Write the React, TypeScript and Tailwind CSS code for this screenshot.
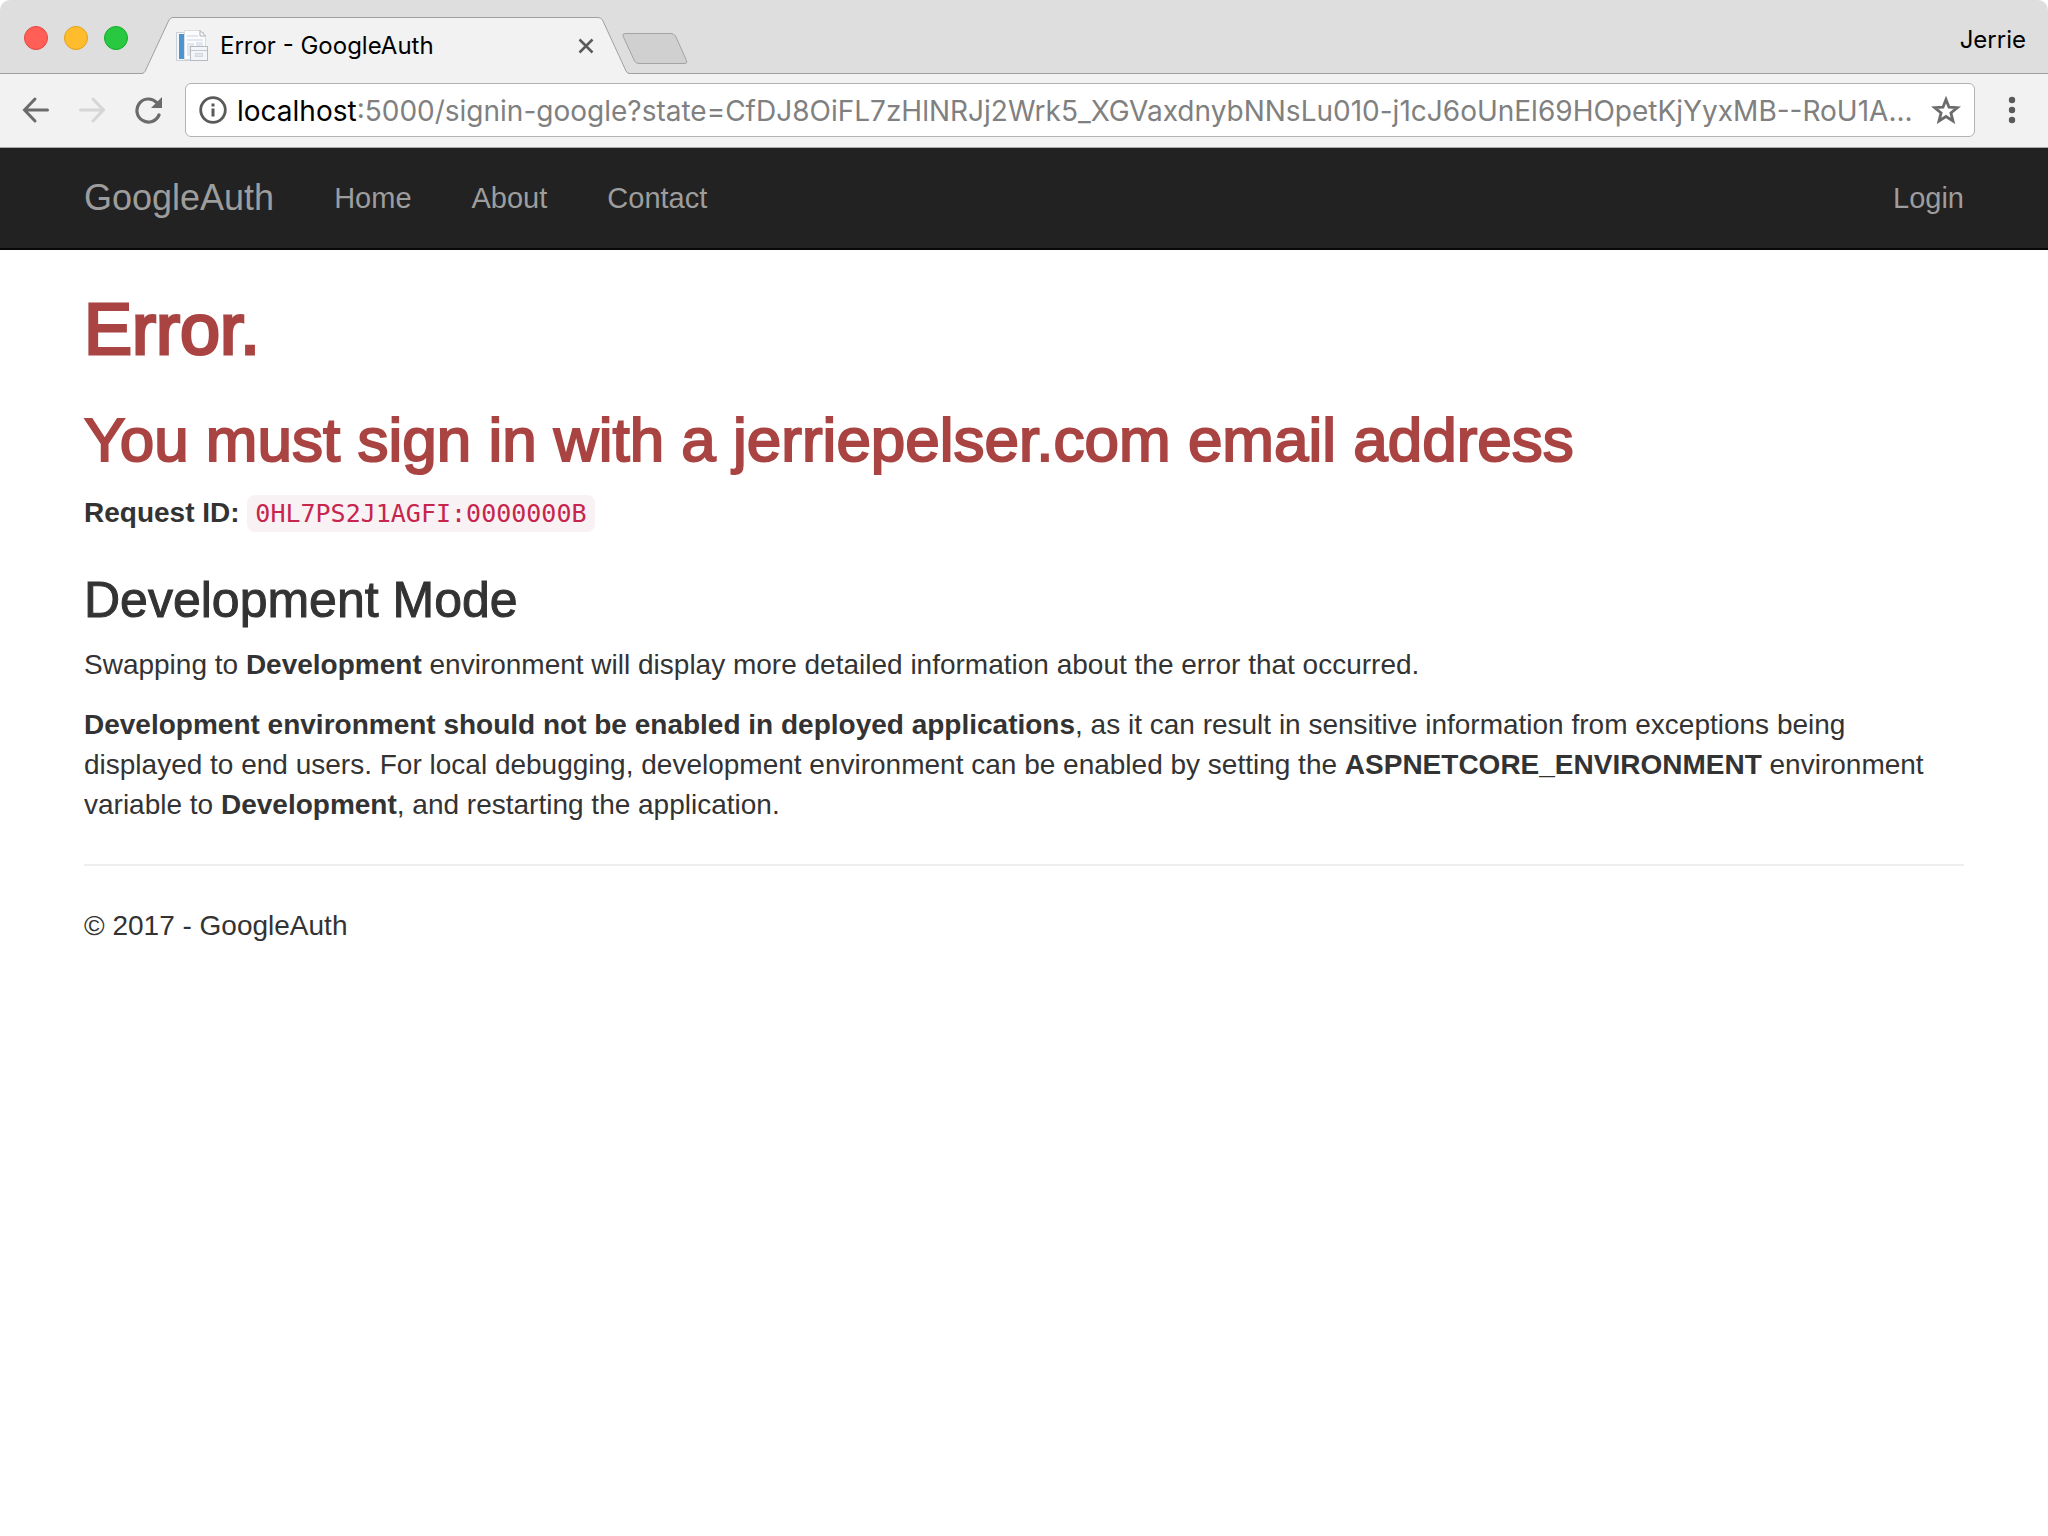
import React from "react";

const strong = "font-bold";

function Favicon() {
  return (
    <svg width="32" height="32" viewBox="0 0 32 32" className="shrink-0" aria-hidden="true">
      <rect x="0.5" y="2.5" width="27" height="28" fill="#f4f6f8" stroke="#c9d2da" />
      <rect x="3" y="4" width="5" height="25" fill="#4a94d0" />
      <path d="M8.500 .5h15.500l5.500 5.500V29.500H8.500z" fill="#fbfcfd" stroke="#d8dde1" />
      <path d="M24 .5v5.500h5.500z" fill="#fff" stroke="#a9b0b6" />
      <path d="M11 6h11M11 10h16" stroke="#e4e8ee" strokeWidth="2" />
      <rect x="11" y="13" width="7" height="13" fill="#e2e6ee" />
      <rect x="20" y="12" width="7" height="4" fill="#e2e6ee" />
      <rect x="14.500" y="16.500" width="17" height="14" fill="#f3f5f8" stroke="#b4babf" />
      <path d="M15 20.500h16" stroke="#c3c9cf" />
      <rect x="19.500" y="23.500" width="7" height="3" fill="#e3e6ea" stroke="#d3d8dc" />
    </svg>
  );
}

function TabStrip() {
  return (
    <header className="flex h-[74px] items-stretch rounded-t-[10px] border-b border-[#a0a0a0] bg-[#dedede]">
      <div className="flex items-center gap-4 pt-[3px] pl-6">
        <button aria-label="Close window" className="size-6 rounded-full border border-[#e2463f] bg-[#ff5f57]" />
        <button aria-label="Minimise window" className="size-6 rounded-full border border-[#e1a116] bg-[#ffbd2e]" />
        <button aria-label="Zoom window" className="size-6 rounded-full border border-[#12ac28] bg-[#28c940]" />
      </div>
      <div className="relative -mb-px ml-[14px] flex h-[74px] w-[488px] items-center pt-[18px]">
        <svg className="absolute inset-0" width="488" height="74" viewBox="0 0 488 74" aria-hidden="true">
          <path d="M0 74 Q2 73 3 71.500 L27 20 Q28.500 17.500 31 17.500 H456 Q459 17.500 460.500 20 L484 71 Q485 73.500 488 74z" fill="#f2f2f2" />
          <path d="M0 73.500 Q2 73 3 71.500 L27 20 Q28.500 17.500 31 17.500 H456 Q459 17.500 460.500 20 L484 71 Q485 73.500 488 73.500" fill="none" stroke="#a0a0a0" />
        </svg>
        <div className="relative flex w-full items-center pr-9 pl-[34px]">
          <Favicon />
          <span className="ml-3 grow font-['Inter',sans-serif] text-[24px] leading-8 text-black">Error - GoogleAuth</span>
          <button aria-label="Close tab">
            <svg width="16" height="16" viewBox="0 0 16 16" stroke="#5a5a5a" strokeWidth="2.500">
              <path d="M1.500 1.500l13 13M14.500 1.500l-13 13" />
            </svg>
          </button>
        </div>
      </div>
      <button aria-label="New tab" className="mt-[32px] -ml-[8px] self-start">
        <svg width="66" height="33" viewBox="0 0 66 33">
          <path d="M4 1.500H49Q52 1.500 53.500 4L64.500 28.500Q65.500 31.500 63 31.500H17Q14 31.500 12.500 29L1 4Q0 1.500 4 1.500z" fill="#d0d0d0" stroke="#a3a3a3" />
        </svg>
      </button>
      <button className="mt-[22px] mr-[22px] ml-auto self-start font-['Inter',sans-serif] text-[24px] leading-9 text-black">Jerrie</button>
    </header>
  );
}

function Toolbar() {
  return (
    <div className="flex h-[74px] items-center border-b border-[#a9a9a9] bg-[#f2f2f2] pb-px pl-[22px]">
      <button aria-label="Back">
        <svg width="28" height="28" viewBox="0 0 28 28" fill="none" stroke="#6b6b6b" strokeWidth="3" strokeLinecap="round">
          <path d="M25.500 14H3M13 3L2.500 14l10.500 11" />
        </svg>
      </button>
      <button aria-label="Forward" className="ml-7">
        <svg width="28" height="28" viewBox="0 0 28 28" fill="none" stroke="#d6d6d8" strokeWidth="3" strokeLinecap="round">
          <path d="M2.500 14H25M15 3l10.500 11L15 25" />
        </svg>
      </button>
      <button aria-label="Reload" className="ml-7">
        <svg width="30" height="28" viewBox="0 0 30 28">
          <path d="M25 19A11.500 11.500 0 1 1 22.500 6.300" fill="none" stroke="#6b6b6b" strokeWidth="3.200" strokeLinecap="round" />
          <path d="M28 1v11H17z" fill="#6b6b6b" />
        </svg>
      </button>
      <form className="ml-[21px] flex h-[54px] grow items-center rounded-md border border-[#b3b3b3] bg-white px-[13px] font-['Inter',sans-serif] text-[28px] leading-10">
        <svg width="28" height="28" viewBox="0 0 28 28" className="shrink-0" aria-hidden="true">
          <circle cx="14" cy="14" r="12.300" fill="none" stroke="#5a5a5a" strokeWidth="2.800" />
          <path d="M12.500 7.500h3v3h-3zM12.500 12.500h3v8h-3z" fill="#5a5a5a" />
        </svg>
        <label htmlFor="address" className="ml-[10px] pt-0.5 text-black">localhost</label>
        <input
          id="address"
          className="min-w-0 grow pt-0.5 text-[#808080] outline-none"
          defaultValue=":5000/signin-google?state=CfDJ8OiFL7zHlNRJj2Wrk5_XGVaxdnybNNsLu010-j1cJ6oUnEl69HOpetKjYyxMB--RoU1A..."
        />
        <button type="button" aria-label="Bookmark this page">
          <svg width="30" height="28" viewBox="0 0 30 28" fill="none" stroke="#6b6b6b" strokeWidth="2.800">
            <path d="M15 3.500l3 7.700 8.300.5-6.400 5.200 2.100 8.100-7-4.500-7 4.500 2.100-8.100-6.400-5.200 8.300-.5z" />
          </svg>
        </button>
      </form>
      <button aria-label="Menu" className="mr-8 ml-[33px]">
        <svg width="8" height="28" viewBox="0 0 8 28" fill="#5a5a5a">
          <circle cx="4" cy="4" r="3.200" />
          <circle cx="4" cy="14" r="3.200" />
          <circle cx="4" cy="24" r="3.200" />
        </svg>
      </button>
    </div>
  );
}

function Navbar() {
  return (
    <nav className="flex items-center border-b-2 border-[#080808] bg-[#222] px-[84px] text-[29px] leading-10 text-[#9d9d9d]">
      <a href="#" className="py-[30px] pr-[30px] text-[36px]">GoogleAuth</a>
      <a href="#" className="p-[30px]">Home</a>
      <a href="#" className="p-[30px]">About</a>
      <a href="#" className="p-[30px]">Contact</a>
      <a href="#" className="ml-auto py-[30px]">Login</a>
    </nav>
  );
}

export default function App() {
  return (
    <div className="min-h-screen bg-white font-['Liberation_Sans',sans-serif] text-[28px] leading-10 text-[#333]">
      <TabStrip />
      <Toolbar />
      <Navbar />
      <main className="px-[84px]">
        <h1 className="mt-10 text-[72px] leading-[79px] text-[#a94442] [-webkit-text-stroke:3px_#a94442]">Error.</h1>
        <h2 className="mt-[38px] mb-5 text-[62px] leading-[66px] text-[#a94442] [-webkit-text-stroke:2px_#a94442]">
          You must sign in with a jerriepelser.com email address
        </h2>
        <p>
          <strong className={strong}>Request ID:</strong>{" "}
          <code className="rounded-lg bg-[#f9f2f4] px-2 py-1 font-['DejaVu_Sans_Mono',monospace] text-[25px] text-[#c7254e]">0HL7PS2J1AGFI:0000000B</code>
        </p>
        <h3 className="mt-10 mb-[19px] text-[50px] leading-[52px] [-webkit-text-stroke:1px_#333]">Development Mode</h3>
        <p>
          Swapping to <strong className={strong}>Development</strong> environment will display more detailed information about the error that occurred.
        </p>
        <p className="mt-5">
          <strong className={strong}>Development environment should not be enabled in deployed applications</strong>, as it can result in sensitive information
          from exceptions being displayed to end users. For local debugging, development environment can be enabled by setting the{" "}
          <strong className={strong}>ASPNETCORE_ENVIRONMENT</strong> environment variable to <strong className={strong}>Development</strong>, and restarting the
          application.
        </p>
        <hr className="mt-[39px] mb-10 border-t-2 border-[#eee]" />
        <footer>© 2017 - GoogleAuth</footer>
      </main>
    </div>
  );
}
